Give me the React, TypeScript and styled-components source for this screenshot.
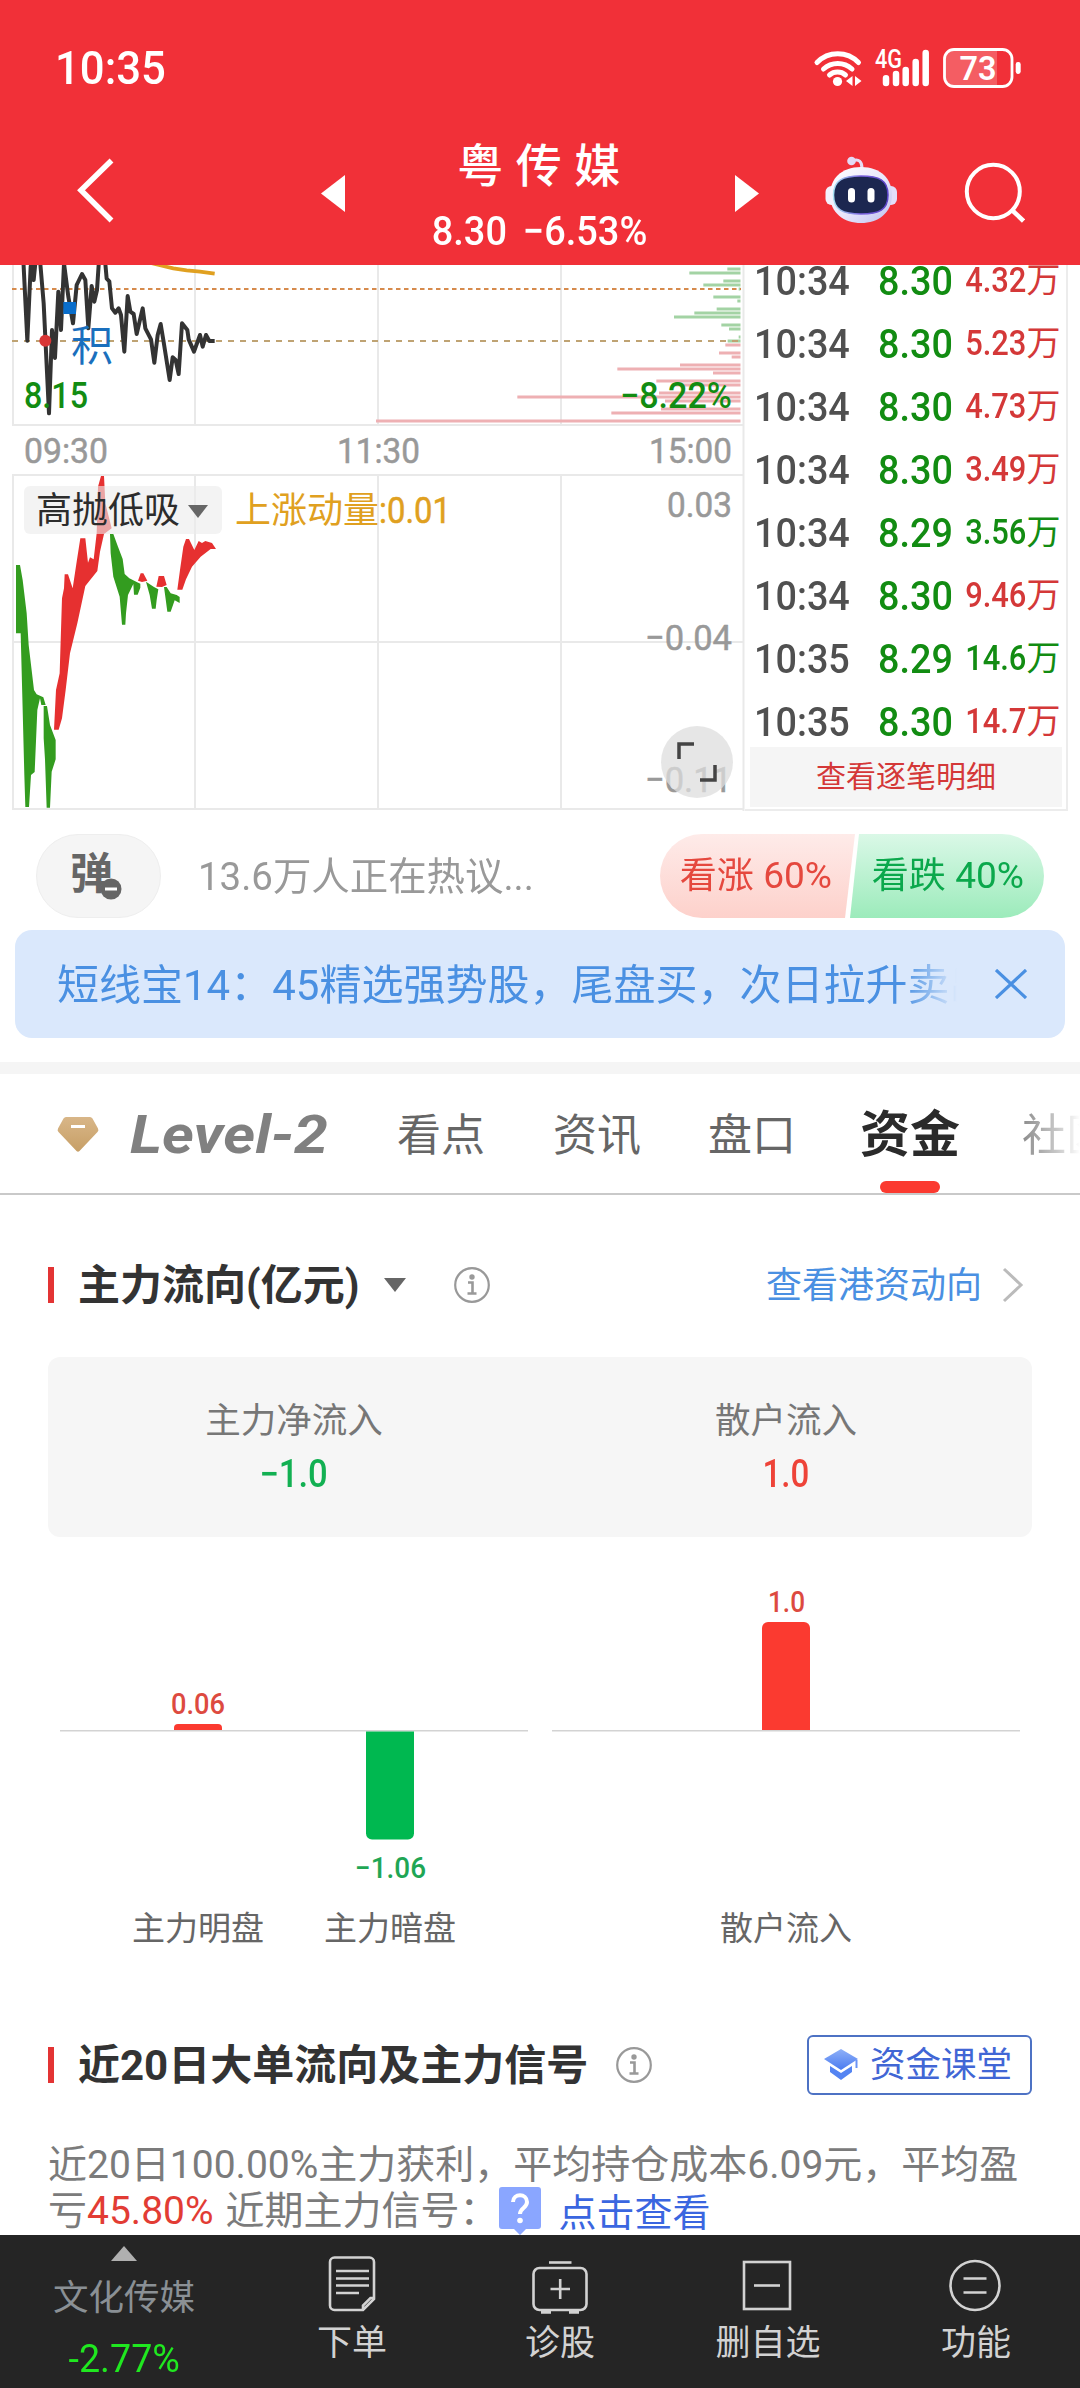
import React from 'react';
import styled, { createGlobalStyle } from 'styled-components';

const GlobalStyle = createGlobalStyle`
  * { box-sizing: border-box; }
  body {
    margin: 0;
    background: #fff;
    font-family: Roboto, 'Noto Sans CJK SC', sans-serif;
    color: #333;
  }
  svg { display: block; flex-shrink: 0; }
`;

const Page = styled.main`
  width: 1080px;
  height: 2388px;
  overflow: hidden;
  display: flex;
  flex-direction: column;
  background: #fff;
`;

const Text = styled.span<{ $size: number; $color?: string; $weight?: number; $squeeze?: number; $from?: string }>`
  display: inline-block;
  white-space: nowrap;
  font-size: ${p => p.$size}px;
  line-height: ${p => Math.round(p.$size * 1.2)}px;
  font-weight: ${p => p.$weight ?? 400};
  color: ${p => p.$color ?? 'inherit'};
  transform: scaleX(${p => p.$squeeze ?? 1});
  transform-origin: ${p => p.$from ?? 'center'};
`;

/* ---------- header ---------- */

const Header = styled.header`
  height: 265px;
  flex-shrink: 0;
  background: #f13038;
  color: #fff;
  display: flex;
  flex-direction: column;
  position: relative;
  z-index: 1;
`;

const StatusBar = styled.div`
  height: 134px;
  padding: 2px 59px 0 55px;
  display: flex;
  align-items: center;
  justify-content: space-between;
`;

const NavBar = styled.div`
  height: 130px;
  display: grid;
  grid-template-columns: 77px 244px 390px 113px 139px 1fr;
  align-items: start;
`;

const TitleBlock = styled.div`
  display: flex;
  width: 390px;
  align-items: flex-start;
`;

const TitleText = styled.div`
  flex: 1;
  padding-left: 24px;
  display: flex;
  flex-direction: column;
  align-items: center;
  white-space: pre;
`;

const StockName = styled.h1`
  margin: 4px 0 0;
  font-size: 46px;
  line-height: 56px;
  font-weight: 500;
  letter-spacing: 12.5px;
  padding-left: 10px;
`;

const StockPrice = styled.div`
  font-size: 41px;
  line-height: 50px;
  font-weight: 500;
  margin-top: 12px;
  transform: scaleX(0.925);
  word-spacing: 7px;
`;

const NavIcon = styled.div<{ $top: number }>`
  padding-top: ${p => p.$top}px;
`;

const StatusIcons = () => (
  <svg width="208" height="44" viewBox="813 45 208 44" fill="none" stroke="#fff">
    <g strokeWidth="5" strokeLinecap="round">
      <path d="M817 61.5a29 29 0 0 1 41.500 0" />
      <path d="M823.500 68a21 21 0 0 1 28.500 0" />
      <path d="M829.500 74a12.500 12.500 0 0 1 16 0" />
    </g>
    <circle cx="837.500" cy="80.500" r="4.600" fill="#fff" stroke="none" />
    <path d="M852.500 75v10l-6.500-5zM855 75v10l6.500-5z" fill="#fff" stroke="none" />
    <text x="875" y="67" fontSize="25" fontWeight="500" fill="#fff" stroke="none" textLength="27" lengthAdjust="spacingAndGlyphs">4G</text>
    <path d="M886 77.200v4.800M896 73v9M905.700 69v13M915.700 61v21M925.700 52v30" strokeWidth="6.500" strokeLinecap="round" />
    <path d="M952 49.500h45v35h-45a7 7 0 0 1-7-7v-21a7 7 0 0 1 7-7z" fill="#fff" fillOpacity=".22" stroke="none" />
    <rect x="944.500" y="48.500" width="67.500" height="37" rx="9.500" strokeWidth="2.800" />
    <rect x="1015.700" y="61" width="5" height="12" rx="2.400" fill="#fff" stroke="none" />
    <text x="959.500" y="79" fontSize="34" fontWeight="600" fill="#fff" stroke="none" textLength="37" lengthAdjust="spacingAndGlyphs">73</text>
  </svg>
);

const BackIcon = () => (
  <svg width="38" height="66" viewBox="76 157 38 66" fill="none" stroke="#fff" strokeWidth="5.500">
    <path d="M110.500 160.500 80 190.300l30.500 30.200" />
  </svg>
);

const RobotIcon = () => (
  <svg width="74" height="68" viewBox="824 156 74 68">
    <defs>
      <linearGradient id="shell" x1="0" y1="0" x2="1" y2="1">
        <stop offset="0" stopColor="#fff" />
        <stop offset=".55" stopColor="#e9e6fb" />
        <stop offset="1" stopColor="#bcc0ee" />
      </linearGradient>
      <linearGradient id="rim" x1="0" y1="0" x2="1" y2="0">
        <stop offset="0" stopColor="#a8e2f4" />
        <stop offset=".5" stopColor="#7b62dd" />
        <stop offset="1" stopColor="#5a43c8" />
      </linearGradient>
    </defs>
    <path d="M852 161c7-3 10 1 10 7" stroke="#e6dcf4" strokeWidth="3" fill="none" />
    <circle cx="851.500" cy="161" r="4.300" fill="#e3daf5" />
    <rect x="825.500" y="186" width="14" height="19" rx="6" fill="#f3f0fc" />
    <rect x="882.500" y="186" width="14.500" height="19" rx="6" fill="#e3defa" />
    <path d="M861 167c20 0 31 12 31 28 0 18-14 28-31 28s-31-10-31-28c0-16 11-28 31-28z" fill="url(#shell)" />
    <path d="M861 176c18 0 27 4 27 19s-9 19-27 19-27.500-4-27.500-19 9.500-19 27.500-19z" fill="#1c2750" stroke="url(#rim)" strokeWidth="1.500" />
    <rect x="848" y="188" width="7" height="14.500" rx="3.500" fill="#fff" />
    <rect x="867.500" y="188" width="7" height="14.500" rx="3.500" fill="#fff" />
  </svg>
);

const SearchIcon = () => (
  <svg width="62" height="64" viewBox="964 161 62 64" fill="none" stroke="#fff" strokeWidth="4">
    <ellipse cx="994.300" cy="191.500" rx="26.500" ry="26.800" />
    <path d="m1013.500 210.500 11 10.500" strokeWidth="4.500" />
  </svg>
);

/* ---------- intraday chart ---------- */

const QuoteRow = styled.section`
  height: 547px;
  margin-top: -1px;
  flex-shrink: 0;
  display: grid;
  grid-template-columns: 745px 323px;
`;

const ChartArea = styled.div`
  position: relative;
`;

const IndicatorPicker = styled.button`
  position: absolute;
  left: 24px;
  top: 222px;
  width: 198px;
  height: 48px;
  padding: 2px 14px 0 12px;
  border: 0;
  border-radius: 6px;
  background: rgba(236, 236, 236, 0.62);
  color: #2c2c2c;
  font: 400 36px/46px Roboto, 'Noto Sans CJK SC', sans-serif;
  display: flex;
  align-items: center;
  justify-content: space-between;
`;

const ExpandButton = styled.div`
  position: absolute;
  left: 661px;
  top: 462px;
  width: 72px;
  height: 72px;
  border-radius: 50%;
  background: rgba(222, 222, 222, 0.75);
  display: grid;
  place-items: center;
`;

const volumeBars: Array<[number, number, boolean]> = [
  [27, 1102, false], [39, 988, false], [63, 1090, false], [75, 1030, false], [87, 1136, false],
  [111, 1060, false], [123, 1132, false], [147, 1070, false], [159, 1003, false], [171, 942, false],
  [195, 1084, false], [207, 1107, false], [231, 1136, false], [243, 1103, false],
  [255, 1096, true], [279, 1077, true], [291, 1115, true], [315, 960, true], [327, 772, true],
  [339, 1059, true], [363, 889, true], [375, 935, true], [399, 897, true], [411, 472, true],
  [423, 915, true], [447, 903, true], [459, 754, true], [483, 48, true],
];

const IntradayChart = () => (
  <svg width="745" height="547" viewBox="0 264 745 547">
    <g stroke="#e9e9e9" strokeWidth="2" fill="none">
      <path d="M13 264V425M195 264V425M378 264V425M561 264V425M12 425H744" />
      <path d="M13 475V809M195 475V809M378 475V809M561 475V809M12 475H744M12 642H744M12 809H744" />
      <path d="M743.500 264V811" />
    </g>
    {volumeBars.map(([y, x, up]) => (
      <rect key={y} x={360 + x / 3} y={260 + y / 3 - 1.5} width={380.5 - x / 3} height="3" fill={up ? '#eeb0b3' : '#a3d3a4'} />
    ))}
    <path d="M12 289H741" stroke="#d68a4c" strokeWidth="2" strokeDasharray="4.500 3.500" />
    <path d="M12 341H741" stroke="#bfa373" strokeWidth="2" strokeDasharray="6 6" />
    <g transform="translate(0 260) scale(.333333)">
      <path d="M440 6 480 16 520 25 560 31 600 35 644 41" fill="none" stroke="#e0a020" strokeWidth="11" />
      <path
        d="M70 0 82 242 92 20 96 0 101 60 107 0 120 0 131 130 147 460 156 210 165 294 175 95 183 210 192 10 205 110 219 190 230 75 246 42 256 60 265 205 275 78 283 125 291 90 297 0 315 0 320 56 328 64 336 145 346 158 356 145 363 165 373 275 383 108 391 155 401 162 410 222 428 145 436 205 453 238 463 308 473 225 482 192 490 240 509 360 518 292 527 300 536 342 546 190 562 210 566 238 582 275 600 225 608 260 618 225 628 243 644 243"
        fill="none" stroke="#333" strokeWidth="12" strokeLinejoin="round"
      />
      <circle cx="136" cy="242" r="18" fill="#d93636" />
      <rect x="190" y="126" width="38" height="36" fill="#0a6ecb" />
    </g>
    <text x="71" y="361" fontSize="42" fill="#1a6fbd">积</text>
    <g fontSize="36" fontWeight="500" fill="#128c12">
      <text x="24" y="408" textLength="64" lengthAdjust="spacingAndGlyphs">8.15</text>
      <text x="620" y="408" textLength="112" lengthAdjust="spacingAndGlyphs">−8.22%</text>
    </g>
    <g fontSize="35.500" fill="#999" stroke="#999" strokeWidth=".5">
      <text x="24" y="463" textLength="84" lengthAdjust="spacingAndGlyphs">09:30</text>
      <text x="337" y="463" textLength="83" lengthAdjust="spacingAndGlyphs">11:30</text>
      <text x="649" y="463" textLength="83" lengthAdjust="spacingAndGlyphs">15:00</text>
      <text x="667" y="517" textLength="65" lengthAdjust="spacingAndGlyphs">0.03</text>
      <text x="645" y="650" textLength="87" lengthAdjust="spacingAndGlyphs">−0.04</text>
      <text x="645" y="792" textLength="87" lengthAdjust="spacingAndGlyphs">−0.11</text>
    </g>
    <g transform="translate(0 460) scale(.333333)">
      <path fill="#339c1f" d="M48 315H60L68 360 80 460 86 555 102 690 110 703 130 712 137 735H124L120 715 112 750 104 936 93 945 87 1041H76L73 945 68 750 62 520H48zM131 738H141L150 795 167 840V898L155 935 150 1043H140L135 898 131 835z" />
      <path fill="#339c1f" d="M330 222H340L354 260 368 297 374 342 388 355 410 366 421 371V383L413 404H402L400 372 384 405 378 460 376 494H366L359 410 340 350 332 280zM438 365 462 381 475 388 470 420 467 446H456L449 405zM492 381H500L512 400 530 405 539 411V429L524 421 512 455H502L496 410z" />
      <path fill="#e63030" d="M162 809 168 690 179 640 186 415 192 385 194 343H204L218 385 230 305 241 235H256L264 308 270 292 281 298 290 220 294 80 303 48H312L316 130 335 205 312 222 300 275 292 333 256 378 232 490 210 580 197 690 186 775 176 809zM414 362 422 340H430L442 362 426 366zM469 380 476 348H492L500 375 486 381zM532 389 540 330 550 260 558 237H567L583 270 596 243 606 249 616 243 636 249 648 267 632 267 602 290 576 320 558 358 547 389z" />
    </g>
    <g fill="#e0a020" fontSize="36">
      <text x="235" y="523">上涨动量</text>
      <text x="379" y="523" stroke="#e0a020" strokeWidth=".5" textLength="72" lengthAdjust="spacingAndGlyphs">:0.01</text>
    </g>
  </svg>
);

const TradePanel = styled.aside`
  border-right: 2px solid #ececec;
  border-bottom: 2px solid #ececec;
  padding: 0 4px 0 5px;
  overflow: hidden;
`;

const TradeList = styled.div`
  height: 483px;
  overflow: hidden;
`;

const TradeRow = styled.div`
  height: 63px;
  position: relative;
  top: -15px;
  padding: 0 5px 0 4px;
  display: grid;
  grid-template-columns: 124px 78px 1fr;
  align-items: center;
`;

const DetailLink = styled.a`
  height: 60px;
  background: #f5f5f5;
  display: flex;
  align-items: center;
  justify-content: center;
`;

const Volume = styled.div`
  display: flex;
  align-items: center;
  justify-content: flex-end;
`;

const GREEN = '#128c12';
const RED = '#d43838';
const trades: Array<[string, string, string, string]> = [
  ['10:34', '8.30', '4.32', RED],
  ['10:34', '8.30', '5.23', RED],
  ['10:34', '8.30', '4.73', RED],
  ['10:34', '8.30', '3.49', RED],
  ['10:34', '8.29', '3.56', GREEN],
  ['10:34', '8.30', '9.46', RED],
  ['10:35', '8.29', '14.6', GREEN],
  ['10:35', '8.30', '14.7', RED],
];

/* ---------- discussion + banner ---------- */

const DiscussRow = styled.section`
  height: 119px;
  flex-shrink: 0;
  padding: 23px 36px 12px;
  display: flex;
  align-items: center;
`;

const DanmuButton = styled.div`
  width: 125px;
  height: 84px;
  border-radius: 42px;
  background: #f5f5f5;
  border: 1px solid #eee;
  padding: 0 0 4px 33px;
  display: flex;
  align-items: center;
`;

const DanmuOff = styled.svg`
  margin: 30px 0 0 -16px;
`;

const DiscussText = styled.div`
  flex: 1;
  padding: 2px 0 0 37px;
  color: #999;
`;

const VoteGroup = styled.div`
  display: flex;
  width: 384px;
  height: 84px;
`;

const Vote = styled.div<{ $bull?: boolean }>`
  width: ${p => (p.$bull ? 195 : 194)}px;
  margin-left: ${p => (p.$bull ? 0 : -5)}px;
  flex-shrink: 0;
  display: flex;
  align-items: center;
  justify-content: center;
  padding-right: ${p => (p.$bull ? 4 : 0)}px;
  padding-left: ${p => (p.$bull ? 0 : 1)}px;
  border-radius: ${p => (p.$bull ? '42px 0 0 42px' : '0 42px 42px 0')};
  background: ${p => (p.$bull ? 'linear-gradient(#feebe9, #fdd1cb)' : 'linear-gradient(#daf8e7, #9cebbb)')};
  clip-path: ${p => (p.$bull ? 'polygon(0 0, 100% 0, calc(100% - 10px) 100%, 0 100%)' : 'polygon(9px 0, 100% 0, 100% 100%, 0 100%)')};
`;

const Banner = styled.section`
  height: 108px;
  flex-shrink: 0;
  margin: 0 15px;
  padding: 0 38px 0 42px;
  border-radius: 17px;
  background: #dae8fc;
  color: #4a90e2;
  display: flex;
  align-items: center;
  justify-content: space-between;
`;

const BannerText = styled.div`
  width: 900px;
  padding-top: 3px;
  overflow: hidden;
  white-space: nowrap;
  font-size: 42px;
  line-height: 60px;
  mask-image: linear-gradient(90deg, #000 94%, transparent 100%);
`;

const Band = styled.div`
  height: 12px;
  margin-top: 24px;
  flex-shrink: 0;
  background: #f5f5f5;
`;

/* ---------- tabs ---------- */

const Tabs = styled.nav`
  height: 121px;
  flex-shrink: 0;
  border-bottom: 2px solid #c9c9c9;
  padding-left: 57px;
  display: flex;
  overflow: hidden;
`;

const Level2 = styled.div`
  width: 340px;
  height: 119px;
  display: flex;
  align-items: center;
  gap: 31px;
`;

const Level2Text = styled.span`
  font: italic 700 54px/60px Roboto, sans-serif;
  color: #808080;
  transform: scaleX(1.13);
  transform-origin: left;
  padding-top: 3px;
`;

const Tab = styled.div<{ $active?: boolean; $width: number; $faded?: boolean }>`
  width: ${p => p.$width}px;
  flex-shrink: 0;
  height: 119px;
  display: flex;
  flex-direction: column;
  justify-content: space-between;
  padding-top: ${p => (p.$active ? 30 : 31)}px;
  white-space: nowrap;
  font-size: ${p => (p.$active ? 50 : 44)}px;
  font-weight: ${p => (p.$active ? 700 : 400)};
  line-height: 62px;
  color: ${p => (p.$active ? '#2b2b2b' : '#666')};
  ${p => p.$faded && `
    mask-image: linear-gradient(90deg, rgba(0,0,0,.75), rgba(0,0,0,.35) 62%, transparent 100%);
  `}
`;

const Underline = styled.div`
  width: 60px;
  height: 12px;
  border-radius: 6px;
  background: #fb3a30;
  margin-left: 20px;
`;

/* ---------- capital sections ---------- */

const SectionHead = styled.div<{ $height: number; $top: number }>`
  height: ${p => p.$height}px;
  flex-shrink: 0;
  padding: ${p => p.$top}px 48px 0;
  display: flex;
  align-items: center;
`;

const Marker = styled.div`
  width: 6px;
  height: 36px;
  background: #e33434;
  margin-right: 24px;
`;

const SectionTitle = styled.h2`
  margin: 0;
  padding-top: 2px;
  font-size: 42px;
  line-height: 54px;
  font-weight: 700;
  color: #333;
  white-space: nowrap;
`;

const HeadSpacer = styled.div<{ $w?: number }>`
  ${p => (p.$w ? `width: ${p.$w}px;` : 'flex: 1;')}
`;

const LinkText = styled.a`
  font-size: 36px;
  line-height: 44px;
  padding-top: 2px;
  color: #4a90e2;
  margin-right: 18px;
`;

const InfoIcon = () => (
  <svg width="38" height="38" viewBox="-19 -19 38 38">
    <circle r="16.800" fill="none" stroke="#999" strokeWidth="2.200" />
    <circle cy="-8" r="2.700" fill="#999" />
    <path d="M-4-2.500H.5V8.500M-4.500 8.500h9" stroke="#999" strokeWidth="2.600" fill="none" />
  </svg>
);

const SummaryCard = styled.div`
  height: 180px;
  flex-shrink: 0;
  margin: 0 48px;
  border-radius: 12px;
  background: #f6f6f6;
  display: grid;
  grid-template-columns: 1fr 1fr;
  padding-top: 43px;
`;

const SummaryItem = styled.div`
  display: flex;
  flex-direction: column;
  align-items: center;
  gap: 8px;
`;

const FlowChart = () => (
  <svg width="1080" height="424" viewBox="0 1537 1080 424">
    <path d="M60 1730.800H528M552 1730.800H1020" stroke="#d3d3d3" strokeWidth="1.600" />
    <path d="M174 1730v-2a4 4 0 0 1 4-4h40a4 4 0 0 1 4 4v2z" fill="#fb3a30" />
    <path d="M762 1730v-102a6 6 0 0 1 6-6h36a6 6 0 0 1 6 6v102z" fill="#fb3a30" />
    <path d="M366 1731.500v102a6 6 0 0 0 6 6h36a6 6 0 0 0 6-6v-102z" fill="#00b850" />
    <g fontSize="29.500" fontWeight="500">
      <text x="171" y="1713.500" fill="#dd4a40" textLength="54" lengthAdjust="spacingAndGlyphs">0.06</text>
      <text x="768" y="1612" fill="#dd4a40" textLength="37" lengthAdjust="spacingAndGlyphs">1.0</text>
      <text x="355" y="1878" fill="#1fa655" textLength="71" lengthAdjust="spacingAndGlyphs">−1.06</text>
    </g>
    <g fontSize="33" fill="#666" textAnchor="middle">
      <text x="198" y="1940">主力明盘</text>
      <text x="390" y="1940">主力暗盘</text>
      <text x="786" y="1940">散户流入</text>
    </g>
  </svg>
);

const CourseButton = styled.button`
  width: 225px;
  height: 60px;
  border: 2px solid #4d72c4;
  border-radius: 6px;
  background: #fff;
  color: #4166d5;
  padding: 0 0 0 15px;
  display: flex;
  align-items: center;
  gap: 12px;
  font: 400 35.5px/50px Roboto, 'Noto Sans CJK SC', sans-serif;
`;

const Summary = styled.div`
  margin: 0 48px;
  height: 93px;
  flex-shrink: 0;
  color: #7b7b7b;
  font-size: 39px;
  line-height: 46px;
  white-space: nowrap;
`;

const SummaryLine = styled.div`
  display: flex;
  align-items: center;
  height: 46px;
`;

const Highlight = styled.span`
  color: #e23c34;
  margin-right: 12px;
`;

const BlueLink = styled.a`
  color: #3a66e0;
  font-size: 38px;
  padding: 4px 0 0 18px;
`;

/* ---------- footer ---------- */

const Footer = styled.footer`
  height: 153px;
  flex-shrink: 0;
  background: #252525;
  color: #d2d2d2;
  display: grid;
  grid-template-columns: 248px repeat(4, 208px);
`;

const SectorCell = styled.div`
  display: flex;
  flex-direction: column;
  align-items: center;
  padding-top: 11px;
  gap: 16px;
`;

const FooterCell = styled.div`
  display: flex;
  flex-direction: column;
  align-items: center;
  padding-top: 21px;
  font-size: 35px;
  line-height: 44px;
  gap: 8px;
`;

const footerItems: Array<[string, React.ReactNode]> = [
  ['下单', (
    <>
      <path d="M7.500 1.500h35A4.500 4.500 0 0 1 47 6V43L36 54H7.500A4.500 4.500 0 0 1 3 49.500V6A4.500 4.500 0 0 1 7.500 1.500zM47 42h-3.500L36 49.500v4" />
      <path d="M9 15h33M9 22.500h33M9 29.500h33M9 37h23" />
    </>
  )],
  ['诊股', (
    <>
      <path d="M14 6.500h22.500" />
      <rect x="-1.500" y="12" width="53" height="42" rx="6" />
      <path d="M15.500 33h19.500M25.200 23v20" />
      <path d="M6 56h10M34 56h10" strokeWidth="3.500" />
    </>
  )],
  ['删自选', (
    <>
      <rect x="1" y="6" width="46" height="47" />
      <path d="M11 29.500h26" />
    </>
  )],
  ['功能', (
    <>
      <circle cx="24" cy="29.500" r="24.500" />
      <path d="M12.500 22.500h23M12.500 36.500h23" />
    </>
  )],
];

export default function App() {
  return (
    <Page>
      <GlobalStyle />
      <Header>
        <StatusBar>
          <Text $size={47} $weight={500} $squeeze={0.93} $from="left">10:35</Text>
          <StatusIcons />
        </StatusBar>
        <NavBar>
          <span />
          <NavIcon $top={23}><BackIcon /></NavIcon>
          <TitleBlock>
            <NavIcon $top={41}>
              <svg width="24" height="37"><path d="M24 0v37L0 18.500z" fill="#fff" /></svg>
            </NavIcon>
            <TitleText>
              <StockName>粤传媒</StockName>
              <StockPrice>8.30 −6.53%</StockPrice>
            </TitleText>
          </TitleBlock>
          <NavIcon $top={41}>
            <svg width="48" height="37"><path d="M24 0v37L48 18.500z" fill="#fff" /></svg>
          </NavIcon>
          <NavIcon $top={22}><RobotIcon /></NavIcon>
          <NavIcon $top={27}><SearchIcon /></NavIcon>
        </NavBar>
      </Header>

      <QuoteRow>
        <ChartArea>
          <IntradayChart />
          <IndicatorPicker>
            高抛低吸
            <svg width="20" height="13"><path d="M0 0h20L10 13z" fill="#666" /></svg>
          </IndicatorPicker>
          <ExpandButton>
            <svg width="40" height="40" fill="none" stroke="#444" strokeWidth="3.500">
              <path d="M2 17V2h15M38 23v15H23" />
            </svg>
          </ExpandButton>
        </ChartArea>
        <TradePanel>
          <TradeList>
            {trades.map(([time, price, volume, color], i) => (
              <TradeRow key={i}>
                <Text $size={41.5} $color="#505050" $weight={500} $squeeze={0.91} $from="left">{time}</Text>
                <Text $size={41.5} $color={GREEN} $weight={500} $squeeze={0.91} $from="left">{price}</Text>
                <Volume>
                  <Text $size={35.5} $color={color} $weight={500} $squeeze={0.87} $from="right">{volume}</Text>
                  <Text $size={34} $color={color}>万</Text>
                </Volume>
              </TradeRow>
            ))}
          </TradeList>
          <DetailLink>
            <Text $size={30} $color={RED}>查看逐笔明细</Text>
          </DetailLink>
        </TradePanel>
      </QuoteRow>

      <DiscussRow>
        <DanmuButton>
          <Text $size={43} $weight={700} $color="#666">弹</Text>
          <DanmuOff width="28" height="28" viewBox="-14 -14 28 28">
            <circle r="13" fill="#f5f5f5" />
            <circle r="10.500" fill="#666" />
            <path d="M-6 0H6" stroke="#fff" strokeWidth="3" />
          </DanmuOff>
        </DanmuButton>
        <DiscussText>
          <Text $size={39} $squeeze={0.985} $from="left">13.6万人正在热议...</Text>
        </DiscussText>
        <VoteGroup>
          <Vote $bull><Text $size={36} $color="#e5483e" $squeeze={1.03}>看涨 60%</Text></Vote>
          <Vote><Text $size={36} $color="#0ba84c" $squeeze={1.03}>看跌 40%</Text></Vote>
        </VoteGroup>
      </DiscussRow>
      <Banner>
        <BannerText>短线宝14：45精选强势股，尾盘买，次日拉升卖出</BannerText>
        <svg width="32" height="30" stroke="#4a90e2" strokeWidth="3.200"><path d="M1 1 31 29M31 1 1 29" /></svg>
      </Banner>
      <Band />

      <Tabs>
        <Level2>
          <svg width="42" height="38" viewBox="0 0 42 38">
            <defs>
              <linearGradient id="gold" x1="0" y1="0" x2="0" y2="1">
                <stop offset="0" stopColor="#d8b688" />
                <stop offset="1" stopColor="#c79f66" />
              </linearGradient>
            </defs>
            <path d="M9 2h24q1.500 0 2.500 1.500L41 13.500q1 2-.5 3.500L22.500 36q-1.500 1.500-3 0L1.500 17Q0 15.500 1 13.500L6.500 3.500Q7.500 2 9 2z" fill="url(#gold)" />
            <path d="M14 11.500h14" stroke="#fff" strokeWidth="3" />
          </svg>
          <Level2Text>Level-2</Level2Text>
        </Level2>
        <Tab $width={156}>看点</Tab>
        <Tab $width={155}>资讯</Tab>
        <Tab $width={152}>盘口</Tab>
        <Tab $width={162} $active>
          资金
          <Underline />
        </Tab>
        <Tab $width={58} $faded>社区</Tab>
      </Tabs>

      <SectionHead $height={162} $top={18}>
        <Marker />
        <SectionTitle>主力流向(亿元)</SectionTitle>
        <HeadSpacer $w={24} />
        <svg width="23" height="14"><path d="M1 0h22L12 14z" fill="#666" /></svg>
        <HeadSpacer $w={47} />
        <InfoIcon />
        <HeadSpacer />
        <LinkText>查看港资动向</LinkText>
        <svg width="32" height="36" viewBox="0 0 32 36" fill="none" stroke="#bbb" strokeWidth="3"><path d="M4 2 21 18 4 34" /></svg>
      </SectionHead>

      <SummaryCard>
        <SummaryItem>
          <Text $size={35.5} $color="#777">主力净流入</Text>
          <Text $size={38} $weight={500} $color="#12b052" $squeeze={0.91}>−1.0</Text>
        </SummaryItem>
        <SummaryItem>
          <Text $size={35.5} $color="#777">散户流入</Text>
          <Text $size={38} $weight={500} $color="#ee4338" $squeeze={0.87}>1.0</Text>
        </SummaryItem>
      </SummaryCard>
      <FlowChart />

      <SectionHead $height={181} $top={27}>
        <Marker />
        <SectionTitle>近20日大单流向及主力信号</SectionTitle>
        <HeadSpacer $w={27} />
        <InfoIcon />
        <HeadSpacer />
        <CourseButton>
          <svg width="34" height="32" viewBox="0 0 34 32">
            <defs>
              <linearGradient id="cap" x1="0" y1="0" x2="0" y2="1">
                <stop offset="0" stopColor="#8fb0f8" />
                <stop offset="1" stopColor="#4a7bf0" />
              </linearGradient>
            </defs>
            <path d="M17 0 34 10 17 21 0 10z" fill="url(#cap)" />
            <path d="M6 17 17 24 28 17v6L17 31 6 23z" fill="#5484f2" />
            <path d="M32.500 11v8" stroke="#6a93f5" strokeWidth="2" />
          </svg>
          资金课堂
        </CourseButton>
      </SectionHead>

      <Summary>
        <SummaryLine>近20日100.00%主力获利，平均持仓成本6.09元，平均盈</SummaryLine>
        <SummaryLine>
          亏<Highlight>45.80%</Highlight>近期主力信号：
          <svg width="42" height="48" viewBox="0 0 42 48">
            <path d="M3 0h36q3 0 3 3v36q0 3-3 3H27l-6 6-6-6H3q-3 0-3-3V3q0-3 3-3z" fill="#8aa6ff" />
            <path d="M14 15c0-9 14-9 14 0 0 6-7 6-7 12" fill="none" stroke="#fff" strokeWidth="4" />
            <circle cx="21" cy="33.500" r="2.800" fill="#fff" />
          </svg>
          <BlueLink>点击查看</BlueLink>
        </SummaryLine>
      </Summary>

      <Footer>
        <SectorCell>
          <svg width="26" height="15"><path d="M13 0 26 15H0z" fill="#b0b0b0" /></svg>
          <Text $size={35.5} $color="#8a9095">文化传媒</Text>
          <Text $size={38} $color="#20e820" $squeeze={0.99}>-2.77%</Text>
        </SectorCell>
        {footerItems.map(([label, icon]) => (
          <FooterCell key={label}>
            <svg width="50" height="58" viewBox="0 0 50 58" overflow="visible" fill="none" stroke="#d2d2d2" strokeWidth="2.600">{icon}</svg>
            <span>{label}</span>
          </FooterCell>
        ))}
      </Footer>
    </Page>
  );
}
